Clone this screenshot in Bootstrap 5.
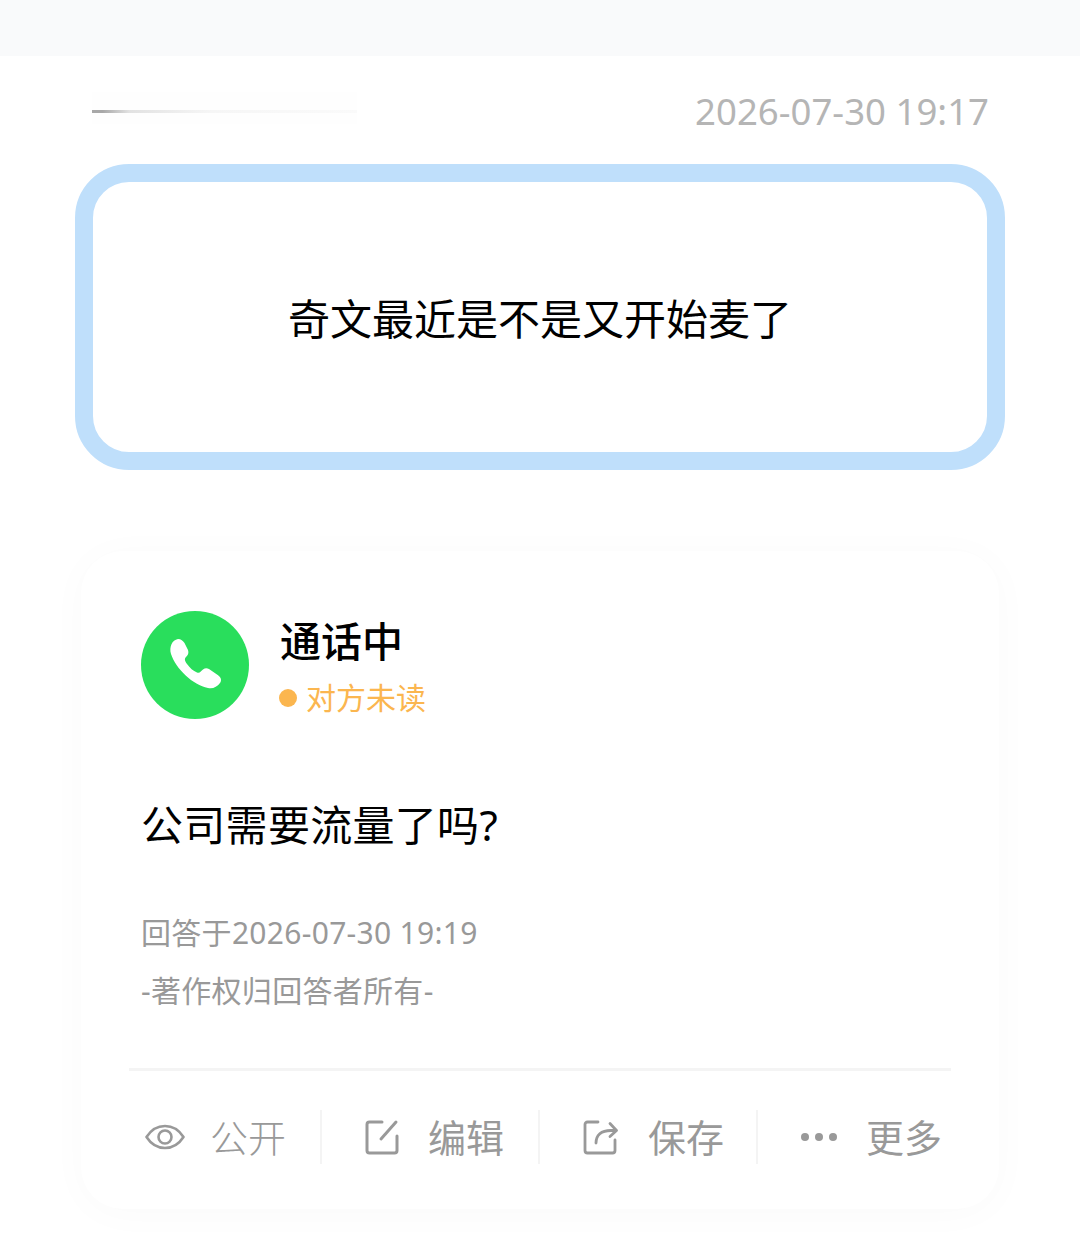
<!DOCTYPE html>
<html lang="zh">
<head>
<meta charset="utf-8">
<title>通话中</title>
<link href="https://cdn.jsdelivr.net/npm/bootstrap@5.3.0/dist/css/bootstrap.min.css" rel="stylesheet">
<style>
html,body{height:100%}
body{background:#fff;font-family:"Noto Sans","Noto Sans CJK SC",sans-serif;color:#000;width:1080px;height:1254px;overflow:hidden}
.top-strip{height:56px;background:#f9fafb}
.meta-row{height:108px;padding:0 91px 0 92px}
.blur-wrap{width:265px;height:32px;margin-bottom:4px;background:#fefefe;box-shadow:0 0 6px #fefefe}
.blur-line{width:265px;height:3px;background:linear-gradient(90deg,#a8a8a8 0,#a8a8a8 4%,#e2e2e2 14%,#f6f6f6 45%,#fafafa 100%);margin-top:18px}
.stamp{font-size:36.6px;color:#b5b5b5;line-height:1;padding-top:2px}
.q-box{width:930px;height:306px;margin-left:75px;padding-top:3px;border:18px solid #bfdffb;border-radius:54px;font-size:42px;line-height:1}
.a-card{width:918px;height:658px;margin:81px 0 0 81px;border-radius:42px;background:#fff;box-shadow:0 4px 40px rgba(0,0,0,.025);padding:60px 48px 0}
.head-row{padding-left:12px;gap:31px}
.call-ico{width:108px;height:108px;border-radius:50%;background:#29de5c}
.call-title{font-size:41px;line-height:1;font-weight:500;margin-top:10px}
.unread{color:#fbb64f;font-size:30px;line-height:1;margin-top:21px;gap:9px;margin-left:-1px}
.unread i{width:18px;height:18px;border-radius:50%;background:#fbb64f;display:block}
.a-text{font-size:42px;line-height:1;padding-left:12px;margin-top:85px;letter-spacing:.3px}
.a-meta{font-size:30px;line-height:1;color:#999;padding-left:12px;letter-spacing:.3px}
.a-meta.first{margin-top:72px}
.a-meta.second{margin-top:28px}
.rule-line{height:3px;background:#f4f4f4;margin-top:62px}
.act-row{height:54px;margin-top:39px}
.act-cell{width:218px;flex:none;color:#999;font-size:38px;line-height:1;border-right:2px solid #f4f4f4;gap:29px;padding-left:43px}
.act-cell.lead{width:193px;padding-left:16px;gap:25px}
.act-cell.last{border-right:0}
.act-cell svg{display:block;flex:none}
</style>
</head>
<body>
<div class="top-strip"></div>
<div class="meta-row d-flex justify-content-between align-items-center">
  <div class="blur-wrap"><div class="blur-line"></div></div>
  <div class="stamp">2026-07-30 19:17</div>
</div>
<div class="q-box d-flex align-items-center justify-content-center">奇文最近是不是又开始麦了</div>
<div class="a-card">
  <div class="head-row d-flex">
    <div class="call-ico d-flex align-items-center justify-content-center">
      <svg width="108" height="108" viewBox="0 0 108 108"><path d="M37 28C40 28 42 30 43.500 32L47 39C48 42 47 44 45 46C43 48 44 50 46 53C49 57 52 60 56 61.500C59 62.500 60 60 62 58.500C64 57 66 57 68 58L76 63.500C80 66 81 69 79 72C76 76 72 78 67 77C52 74 35 58 30 43C28 36 31 29 37 28Z" fill="#fff"/></svg>
    </div>
    <div>
      <div class="call-title">通话中</div>
      <div class="unread d-flex align-items-center"><i></i><span>对方未读</span></div>
    </div>
  </div>
  <div class="a-text">公司需要流量了吗?</div>
  <div class="a-meta first">回答于2026-07-30 19:19</div>
  <div class="a-meta second">-著作权归回答者所有-</div>
  <div class="rule-line"></div>
  <div class="act-row d-flex">
    <div class="act-cell lead d-flex align-items-center">
      <svg width="40" height="26" viewBox="0 0 40 26" fill="none" stroke="#999" stroke-width="2.6"><path d="M1.500 13C6 6 12.500 2 20 2s14 4 18.500 11C34 20 27.500 24 20 24S6 20 1.500 13z" stroke-linejoin="round"/><circle cx="20" cy="13" r="6.500"/></svg>
      <span>公开</span>
    </div>
    <div class="act-cell d-flex align-items-center">
      <svg width="34" height="36" viewBox="0 0 34 36" fill="none" stroke="#999" stroke-width="3" stroke-linecap="round"><path d="M17 3H4.500C3 3 2 4 2 5.500v26C2 33 3 34 4.500 34h25c1.500 0 2.500-1 2.500-2.500V17"/><path d="M16 20 31 3"/></svg>
      <span>编辑</span>
    </div>
    <div class="act-cell d-flex align-items-center">
      <svg width="36" height="36" viewBox="0 0 36 36" fill="none" stroke="#999" stroke-width="2.800" stroke-linecap="round" stroke-linejoin="round"><path d="M15 3H4.500C3 3 2 4 2 5.500v26C2 33 3 34 4.500 34h25c1.500 0 2.500-1 2.500-2.500V21"/><path d="M13 24c0-8 5-12.500 15-12.500h5"/><path d="M27 4.500l6.500 7-6.500 6"/></svg>
      <span>保存</span>
    </div>
    <div class="act-cell last d-flex align-items-center">
      <svg width="36" height="10" viewBox="0 0 36 10" fill="#999"><circle cx="4" cy="5" r="4"/><circle cx="18" cy="5" r="4"/><circle cx="32" cy="5" r="4"/></svg>
      <span>更多</span>
    </div>
  </div>
</div>
<script src="https://cdn.jsdelivr.net/npm/bootstrap@5.3.0/dist/js/bootstrap.bundle.min.js"></script>
</body>
</html>
